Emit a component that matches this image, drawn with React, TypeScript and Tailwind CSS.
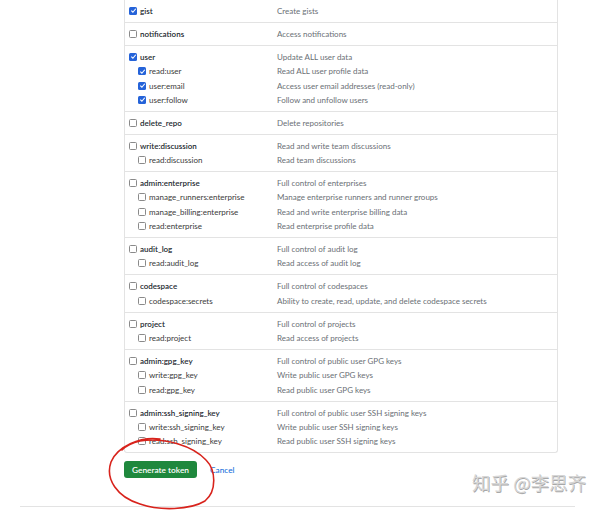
import React from "react";

type Item = { name: string; desc: string; checked?: boolean };
type Group = { main: Item; subs?: Item[] };

const groups: Group[] = [
  { main: { name: "gist", desc: "Create gists", checked: true } },
  { main: { name: "notifications", desc: "Access notifications" } },
  {
    main: { name: "user", desc: "Update ALL user data", checked: true },
    subs: [
      { name: "read:user", desc: "Read ALL user profile data", checked: true },
      { name: "user:email", desc: "Access user email addresses (read-only)", checked: true },
      { name: "user:follow", desc: "Follow and unfollow users", checked: true },
    ],
  },
  { main: { name: "delete_repo", desc: "Delete repositories" } },
  {
    main: { name: "write:discussion", desc: "Read and write team discussions" },
    subs: [{ name: "read:discussion", desc: "Read team discussions" }],
  },
  {
    main: { name: "admin:enterprise", desc: "Full control of enterprises" },
    subs: [
      { name: "manage_runners:enterprise", desc: "Manage enterprise runners and runner groups" },
      { name: "manage_billing:enterprise", desc: "Read and write enterprise billing data" },
      { name: "read:enterprise", desc: "Read enterprise profile data" },
    ],
  },
  {
    main: { name: "audit_log", desc: "Full control of audit log" },
    subs: [{ name: "read:audit_log", desc: "Read access of audit log" }],
  },
  {
    main: { name: "codespace", desc: "Full control of codespaces" },
    subs: [{ name: "codespace:secrets", desc: "Ability to create, read, update, and delete codespace secrets" }],
  },
  {
    main: { name: "project", desc: "Full control of projects" },
    subs: [{ name: "read:project", desc: "Read access of projects" }],
  },
  {
    main: { name: "admin:gpg_key", desc: "Full control of public user GPG keys" },
    subs: [
      { name: "write:gpg_key", desc: "Write public user GPG keys" },
      { name: "read:gpg_key", desc: "Read public user GPG keys" },
    ],
  },
  {
    main: { name: "admin:ssh_signing_key", desc: "Full control of public user SSH signing keys" },
    subs: [
      { name: "write:ssh_signing_key", desc: "Write public user SSH signing keys" },
      { name: "read:ssh_signing_key", desc: "Read public user SSH signing keys" },
    ],
  },
];

function Box({ checked }: { checked?: boolean }) {
  if (checked) {
    return (
      <span className="w-[8px] h-[8px] rounded-[1.5px] bg-[#2563d9] flex items-center justify-center shrink-0">
        <svg width="7" height="7" viewBox="0 0 8 8">
          <path d="M1.5 4.2 L3.3 6 L6.6 2" fill="none" stroke="#fff" strokeWidth="1.3" />
        </svg>
      </span>
    );
  }
  return <span className="w-[8px] h-[8px] rounded-[1.5px] border border-[#8a8a8a] bg-white shrink-0" />;
}

function Row({ item, sub }: { item: Item; sub?: boolean }) {
  return (
    <div className="flex h-[14.4px] items-center">
      <div className={`w-[152px] flex items-center ${sub ? "pl-[13px]" : "pl-[4px]"}`}>
        <Box checked={item.checked} />
        <span
          className={`${sub ? "ml-[3px] text-[#3a3a3a]" : "ml-[3px] font-semibold text-[#24292f]"} text-[8px] leading-[14px] whitespace-nowrap`}
        >
          {item.name}
        </span>
      </div>
      <span className="text-[8px] leading-[14px] text-[#6a6f75] whitespace-nowrap">{item.desc}</span>
    </div>
  );
}

export default function App() {
  return (
    <div
      className="relative w-[600px] h-[510px] bg-white overflow-hidden"
      style={{ fontFamily: 'Lato, "Open Sans", sans-serif' }}
    >
      <div className="pl-[20px] w-[575px]">
        <div className="ml-[104px] w-[434px] border-x border-b border-[#e3e3e3] rounded-b-[3px]">
          {groups.map((g, i) => (
            <div key={i} className={`py-[3.75px] ${i < groups.length - 1 ? "border-b border-[#e3e3e3]" : ""}`}>
              <Row item={g.main} />
              {g.subs?.map((s) => <Row key={s.name} item={s} sub />)}
            </div>
          ))}
        </div>
        <div className="ml-[104px] mt-[8px] flex items-center">
          <button className="w-[73px] h-[17px] rounded-[3px] bg-[#1f883d] text-white text-[8.3px] font-semibold flex items-center justify-center">
            Generate token
          </button>
          <span className="ml-[13px] text-[8.3px] text-[#0969da]">Cancel</span>
        </div>
        <div className="mt-[28px] border-t border-[#e3e3e3]" />
      </div>

      <div
        className="absolute left-[472px] top-[473px] text-[18.5px] leading-[18px] text-[#d6d6d6] whitespace-nowrap"
        style={{
          fontFamily: '"Noto Sans CJK SC", sans-serif',
          textShadow: "0.7px 0.7px 0 #a8a8a8",
        }}
      >
        知乎 @李思齐
      </div>

      <svg className="absolute left-0 top-0 pointer-events-none" width="600" height="510" viewBox="0 0 600 510">
        <path
          d="M160 439 C140 436, 117 447, 111 462 C105 479, 117 497, 140 504 C160 511, 190 510, 205 501 C217 491, 216 470, 206 460 C193 446, 165 437, 140 441 C131 443, 126 446, 122 450"
          fill="none"
          stroke="#d8231c"
          strokeWidth="1.6"
          strokeLinecap="round"
        />
      </svg>
    </div>
  );
}
